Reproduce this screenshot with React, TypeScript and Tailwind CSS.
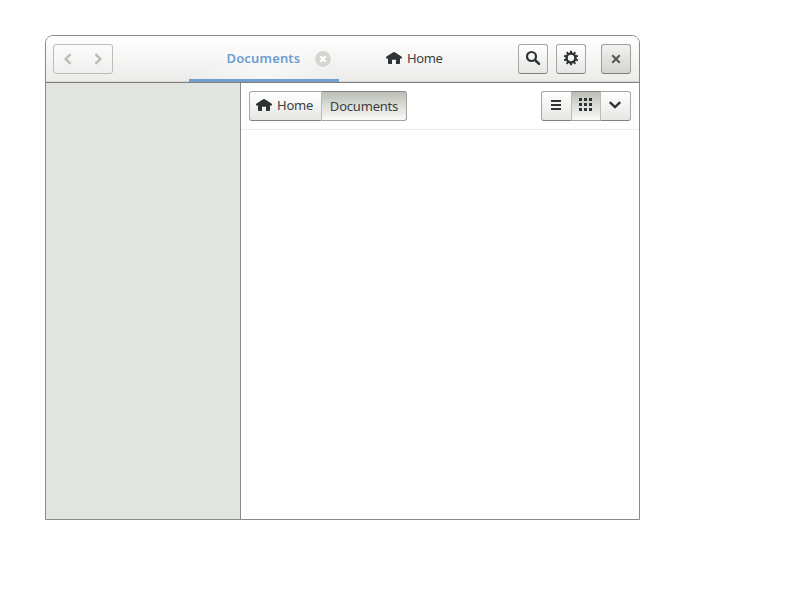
import React from 'react';

const raised =
  'flex items-center justify-center border border-[#a5a7a2] border-b-[#7f817c] bg-linear-to-b from-white to-[#e6e6e4]';
const pressed = 'bg-linear-to-b from-[#babdb5] via-[#dcded9] to-[#fafaf9]';

function HomeIcon() {
  return (
    <svg width="16" height="12" viewBox="0 0 16 12" fill="#2e3436" className="shrink-0">
      <path d="M8 0 Q7.4 0 6.8 .4 L.6 4.4 Q0 4.8 0 5.4 V6.6 H2 V11.2 Q2 12 2.8 12 H6 V7.8 H10 V12 H13.2 Q14 12 14 11.2 V6.6 H16 V5.4 Q16 4.8 15.4 4.4 L9.2 .4 Q8.6 0 8 0 Z" />
    </svg>
  );
}

function Chevron({ d, color }: { d: string; color: string }) {
  return (
    <svg width="16" height="16" viewBox="0 0 16 16" fill="none" stroke={color} strokeWidth="2.4">
      <path d={d} />
    </svg>
  );
}

function SearchIcon() {
  return (
    <svg width="16" height="16" viewBox="0 0 16 16" fill="none" stroke="#2e3436">
      <circle cx="6.5" cy="6.5" r="4.5" strokeWidth="2.2" />
      <path d="M10 10 L14 13.8" strokeWidth="2.5" strokeLinecap="round" />
    </svg>
  );
}

function GearIcon() {
  const angles = [0, 36, 72, 108, 144, 180, 216, 252, 288, 324];
  return (
    <svg width="16" height="16" viewBox="0 0 16 16" fill="none" stroke="#2e3436">
      <circle cx="8" cy="8" r="4.4" strokeWidth="2.5" />
      {angles.map((a) => (
        <path key={a} d="M8 .8 V4" strokeWidth="2" transform={`rotate(${a} 8 8)`} />
      ))}
    </svg>
  );
}

export default function App() {
  return (
    <div className="h-[600px] w-[800px] bg-white pt-[35px] pl-[45px] font-['Noto_Sans',sans-serif] text-[13px] leading-5 text-[#3a4042]">
      <div className="flex h-[485px] w-[595px] flex-col overflow-hidden rounded-t-lg border border-[#888a85] bg-white">
        <header className="flex h-[47px] shrink-0 border-b border-[#80817e] bg-linear-to-b from-white to-[#ebebea] pl-[7px] shadow-[inset_0_-1px_0_#d8d8d6]">
          <div className="mt-2 flex h-[30px] w-[60px] items-center justify-between rounded-[3px] border border-[#babdb6] px-[6px] pb-px">
            <Chevron d="M10.6 3.2 L5.6 8 L10.6 12.8" color="#babdb6" />
            <Chevron d="M5.4 3.2 L10.4 8 L5.4 12.8" color="#babdb6" />
          </div>
          <div className="ml-[76px] flex h-[46px] w-[150px] items-center border-b-[3px] border-[#729fcf] bg-[radial-gradient(ellipse_at_bottom,#ffffff90,transparent_65%)] pt-[2px] pl-[37.5px]">
            <span className="-mt-[2px] w-[88.5px] text-[13px] font-semibold tracking-[0.16px] text-[#6f9dd0]">Documents</span>
            <svg width="16" height="16" viewBox="0 0 16 16">
              <circle cx="8" cy="8" r="7.9" fill="#d3d5cf" />
              <path d="M5.3 5.3 L10.7 10.7 M10.7 5.3 L5.3 10.7" stroke="#fff" strokeWidth="2.2" />
            </svg>
          </div>
          <div className="flex h-[46px] w-[150px] items-center gap-[5px] pb-[2px] pl-[47px]">
            <HomeIcon />
            <span className="tracking-[-0.35px]">Home</span>
          </div>
          <div className="mt-2 ml-[29px] flex h-[30px]">
            <div className={`${raised} w-[30px] rounded-[3px] pb-[2px]`}><SearchIcon /></div>
            <div className={`${raised} ml-2 w-[30px] rounded-[3px] pb-[2px]`}><GearIcon /></div>
            <div className="ml-[15px] flex w-[30px] items-center justify-center rounded-[3px] border border-[#9b9d98] border-b-[#7f817c] bg-linear-to-b from-[#f2f2f0] to-[#d2d4ce]">
              <svg width="16" height="16" viewBox="0 0 16 16" fill="none" stroke="#555753" strokeWidth="2.1">
                <path d="M4.3 4.3 L11.7 11.7 M11.7 4.3 L4.3 11.7" />
              </svg>
            </div>
          </div>
        </header>
        <div className="flex min-h-0 flex-1">
          <aside className="w-[195px] shrink-0 border-r border-[#888a85] bg-[#e2e4df]" />
          <main className="flex-1">
            <div className="flex h-[47px] justify-between border-b border-[#eeeeed] px-2 pt-2">
              <div className="flex h-[30px] w-[158px]">
                <div className={`${raised} w-[72px] justify-start gap-[5px] rounded-l-[3px] border-r-0 pb-[2px] pl-[6px]`}>
                  <HomeIcon />
                  <span className="tracking-[-0.25px]">Home</span>
                </div>
                <div className={`${pressed} flex w-[86px] items-center justify-center rounded-r-[3px] border border-[#a0a29c] border-t-[#858782] border-l-[#babdb5]`}>
                  <span className="tracking-[-0.2px]">Documents</span>
                </div>
              </div>
              <div className="flex h-[30px] w-[90px]">
                <div className={`${raised} w-[30px] rounded-l-[3px] border-r-0 pr-px pb-[2px]`}>
                  <svg width="10" height="10" viewBox="0 0 10 10" fill="#2e3436">
                    <path d="M0 0h10v2H0zM0 4h10v2H0zM0 8h10v2H0z" />
                  </svg>
                </div>
                <div className={`${pressed} flex w-[30px] items-center justify-center border border-x-[#babdb5] border-t-[#858782] border-b-[#a0a29c] pr-px pb-[3px]`}>
                  <svg width="13" height="13" viewBox="0 0 13 13" fill="#2e3436">
                    <path d="M0 0h3v3H0zM5 0h3v3H5zM10 0h3v3h-3zM0 5h3v3H0zM5 5h3v3H5zM10 5h3v3h-3zM0 10h3v3H0zM5 10h3v3H5zM10 10h3v3h-3z" />
                  </svg>
                </div>
                <div className={`${raised} w-[30px] rounded-r-[3px] border-l-0 pr-px pb-[2px]`}>
                  <Chevron d="M2.8 5.2 L8 10.2 L13.2 5.2" color="#2e3436" />
                </div>
              </div>
            </div>
          </main>
        </div>
      </div>
    </div>
  );
}
